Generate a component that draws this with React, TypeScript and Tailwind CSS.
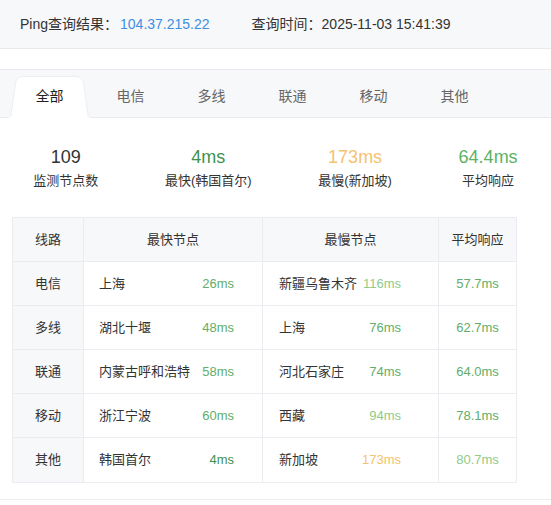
import React, { useState } from 'react';

const font = { fontFamily: '"Liberation Sans", "Noto Sans CJK SC", sans-serif' };

const tabs = ['全部', '电信', '多线', '联通', '移动', '其他'];

const stats = [
  { value: '109', label: '监测节点数', color: 'text-[#333333]' },
  { value: '4ms', label: '最快(韩国首尔)', color: 'text-[#3f9150]' },
  { value: '173ms', label: '最慢(新加坡)', color: 'text-[#f6c26f]' },
  { value: '64.4ms', label: '平均响应', color: 'text-[#5db267]' },
];

// colour by latency, like the reference
const msColor = (ms: number) => {
  if (ms <= 10) return 'text-[#3f9150]';
  if (ms <= 80) return 'text-[#62ae69]';
  if (ms <= 150) return 'text-[#8fcb89]';
  return 'text-[#f6c26f]';
};

const rows = [
  { line: '电信', fast: '上海', fastMs: 26, slow: '新疆乌鲁木齐', slowMs: 116, avg: 57.7 },
  { line: '多线', fast: '湖北十堰', fastMs: 48, slow: '上海', slowMs: 76, avg: 62.7 },
  { line: '联通', fast: '内蒙古呼和浩特', fastMs: 58, slow: '河北石家庄', slowMs: 74, avg: 64.0 },
  { line: '移动', fast: '浙江宁波', fastMs: 60, slow: '西藏', slowMs: 94, avg: 78.1 },
  { line: '其他', fast: '韩国首尔', fastMs: 4, slow: '新加坡', slowMs: 173, avg: 80.7 },
];

export default function App() {
  const [active, setActive] = useState(0);

  return (
    <div className="w-[551px] h-[505px] bg-white text-[#333333] overflow-hidden" style={font}>
      {/* 查询结果 */}
      <div className="h-[49px] bg-[#f7f8fa] border-b border-[#e8eaed] flex items-center pl-5 text-[14px]">
        <span>Ping查询结果：</span>
        <span className="ml-[2px] text-[#3d8fe0]">104.37.215.22</span>
        <span className="ml-[42px]">查询时间：2025-11-03 15:41:39</span>
      </div>

      <div className="h-[20px]" />

      {/* tabs */}
      <div className="h-[49px] bg-[#f7f8fa] border-t border-b border-[#e8eaed] flex items-end pl-[9px]">
        {tabs.map((t, i) => (
          <button
            key={t}
            onClick={() => setActive(i)}
            className={`relative w-[81px] h-[43px] -mb-px text-[14px] flex items-center justify-center ${
              i === active ? 'text-[#222222]' : 'text-[#666666]'
            }`}
          >
            {i === active && (
              <svg className="absolute inset-0" width="81" height="43" viewBox="0 0 81 43">
                <path
                  d="M1.5 43 L6.5 8 Q7.5 1.5 14 1.5 L67 1.5 Q73.5 1.5 74.5 8 L79.5 43 Z"
                  fill="#ffffff"
                  stroke="#eceef1"
                  strokeWidth="1"
                />
                <rect x="0" y="42" width="81" height="1" fill="#ffffff" />
              </svg>
            )}
            <span className="relative">{t}</span>
          </button>
        ))}
      </div>

      {/* 统计 */}
      <div className="flex justify-around pt-[28px] h-[99px]">
        {stats.map((s) => (
          <div key={s.label} className="flex flex-col items-center">
            <div className={`text-[18px] leading-[22px] ${s.color}`}>{s.value}</div>
            <div className="text-[13px] leading-[22px] mt-[2px] text-[#333333]">{s.label}</div>
          </div>
        ))}
      </div>

      {/* 表格 */}
      <div className="mx-3 w-[505px] border border-[#eaecef] text-[13px]">
        <div className="grid grid-cols-[71px_179px_176px_77px] h-[44px] bg-[#f7f8fa] border-b border-[#eaecef]">
          <div className="flex items-center justify-center border-r border-[#eaecef]">线路</div>
          <div className="flex items-center justify-center border-r border-[#eaecef]">最快节点</div>
          <div className="flex items-center justify-center border-r border-[#eaecef]">最慢节点</div>
          <div className="flex items-center justify-center">平均响应</div>
        </div>
        {rows.map((r, i) => (
          <div
            key={r.line}
            className={`grid grid-cols-[71px_179px_176px_77px] h-[44px] ${
              i < rows.length - 1 ? 'border-b border-[#eaecef]' : ''
            }`}
          >
            <div className="flex items-center justify-center bg-[#f7f8fa] border-r border-[#eaecef]">{r.line}</div>
            <div className="flex items-center justify-between pl-[15px] pr-[28px] border-r border-[#eaecef]">
              <span>{r.fast}</span>
              <span className={msColor(r.fastMs)}>{r.fastMs}ms</span>
            </div>
            <div className="flex items-center justify-between pl-[16px] pr-[37px] border-r border-[#eaecef]">
              <span>{r.slow}</span>
              <span className={msColor(r.slowMs)}>{r.slowMs}ms</span>
            </div>
            <div className={`flex items-center justify-center ${msColor(r.avg)}`}>{r.avg.toFixed(1)}ms</div>
          </div>
        ))}
      </div>

      <div className="mt-[16px] border-b border-[#eaecef]" />
    </div>
  );
}
